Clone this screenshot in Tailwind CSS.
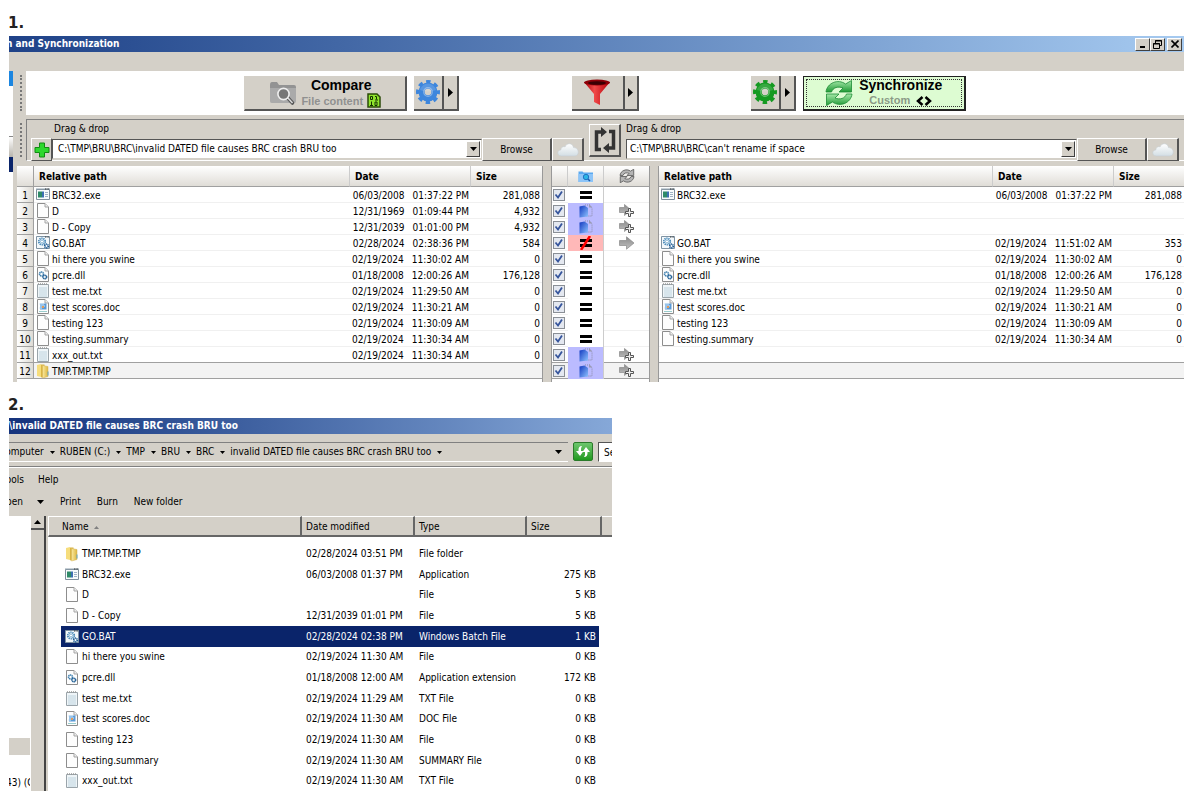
<!DOCTYPE html>
<html lang="en">
<head>
    <!-- Page setup -->
    <meta charset="UTF-8">
    <meta name="viewport" content="width=device-width, initial-scale=1.0">
    <title>Invalid dated file</title>
    <!-- Styling library -->
    <script src="https://cdn.jsdelivr.net/npm/@tailwindcss/browser@4"></script>
</head>
<body class="bg-white text-black px-[9px] pt-[15px] overflow-x-hidden font-['DejaVu_Sans_Condensed','DejaVu_Sans',sans-serif] text-[10px] leading-4">
    <!-- Shared icons -->
    <svg class="absolute w-0 h-0">
        <defs>
            <linearGradient id="gGrey" x1="0" y1="0" x2="0" y2="1"><stop offset="0" stop-color="#8a8a8a"/><stop offset="1" stop-color="#c2c2c2"/></linearGradient>
            <linearGradient id="gBlue" x1="0" y1="0" x2="1" y2="1"><stop offset="0" stop-color="#1238c0"/><stop offset="1" stop-color="#8fc4ff"/></linearGradient>
            <linearGradient id="gGreen" x1="0" y1="0" x2="0" y2="1"><stop offset="0" stop-color="#a5e8a8"/><stop offset="1" stop-color="#1f9a35"/></linearGradient>
            <linearGradient id="gCloud" x1="0" y1="0" x2="0" y2="1"><stop offset="0" stop-color="#ffffff"/><stop offset="1" stop-color="#d3dee4"/></linearGradient>
            <linearGradient id="gRed" x1="0" y1="0" x2="1" y2="0"><stop offset="0" stop-color="#a80008"/><stop offset=".4" stop-color="#f04a4a"/><stop offset="1" stop-color="#b5000a"/></linearGradient>
            <linearGradient id="gFolder" x1="0" y1="0" x2="1" y2="0"><stop offset="0" stop-color="#fbeaa0"/><stop offset="1" stop-color="#dcb640"/></linearGradient>
        </defs>
        <symbol id="file" viewBox="0 0 14 16">
            <path d="M1.500 .5H9l3.500 3.500V14.500H1.500Z" fill="#fdfdfd" stroke="#8d8d8d"/>
            <path d="M9 .5V4h3.500" fill="#eee" stroke="#a5a5a5"/>
        </symbol>
        <symbol id="txt" viewBox="0 0 14 16">
            <path d="M1.500 1.500h11v13h-11Z" fill="#eff5f8" stroke="#9aa4aa"/>
            <path d="M2 1h10" stroke="#999" stroke-width="1.500" stroke-dasharray="1 1"/>
            <path d="M3 5h8M3 7h8M3 9h8M3 11h8M3 13h8" stroke="#b4cbd8" stroke-width=".8"/>
        </symbol>
        <symbol id="doc" viewBox="0 0 14 16">
            <path d="M1.500 .5H9l3.500 3.500V14.500H1.500Z" fill="#fdfdfd" stroke="#8d8d8d"/>
            <path d="M9 .5V4h3.500" fill="#eee" stroke="#a5a5a5"/>
            <path d="M4 4.500h6.500v6H4Z" fill="#5b9ad6"/>
            <path d="M3 5h5M4 7h5M3 9h3" stroke="#d8ecfb"/><path d="M6 7h2v2H6Z" fill="#e39a5a"/><path d="M3 12.500h8" stroke="#9cc"/>
        </symbol>
        <symbol id="dll" viewBox="0 0 14 16">
            <path d="M1.500 .5H9l3.500 3.500V14.500H1.500Z" fill="#fdfdfd" stroke="#8d8d8d"/>
            <path d="M9 .5V4h3.500" fill="#eee" stroke="#a5a5a5"/>
            <circle cx="5.500" cy="7" r="2" fill="none" stroke="#3f7fae" stroke-width="1.600" stroke-dasharray="1.200 .4"/>
            <circle cx="8.800" cy="10" r="1.800" fill="none" stroke="#2a669a" stroke-width="1.600" stroke-dasharray="1.200 .3"/>
        </symbol>
        <symbol id="exe" viewBox="0 0 14 16">
            <path d="M.5 2.500h13v10H.5Z" fill="#f8fbfc" stroke="#7f8f9c"/>
            <path d="M0 2h14" stroke="#8fa0ac"/><path d="M9 2h4" stroke="#333" stroke-dasharray="1 .6"/>
            <path d="M2 4.500h4v6H2Z" fill="#2f8b68"/><path d="M6 4.500h2v6H6Z" fill="#3d6fb2"/><path d="M9 5.500h3M9 7.500h3M9 9.500h3" stroke="#9fb2c4"/>
        </symbol>
        <symbol id="bat" viewBox="0 0 14 16">
            <path d="M.5 1.500h13v12H.5Z" fill="#f3f8fb" stroke="#7f93a3"/><path d="M9 2h4" stroke="#333" stroke-dasharray="1 .6"/>
            <circle cx="6" cy="6.500" r="3.200" fill="none" stroke="#4688b8" stroke-width="1.800" stroke-dasharray="1.300 .7"/>
            <circle cx="6" cy="6.500" r="1.500" fill="#fff" stroke="#6ba3c9" stroke-width=".8"/>
            <circle cx="10.500" cy="11" r="1.800" fill="#fff" stroke="#1f5c94" stroke-width="1.700" stroke-dasharray="1.200 .5"/>
        </symbol>
        <symbol id="folder" viewBox="0 0 14 16">
            <path d="M1 2l4-1v13l-4-1Z" fill="#f6dd7c"/><path d="M5 1.500h3.500v12L5 14.500Z" fill="#d9b445"/>
            <path d="M6.500 2.500l5.500 1v10l-5.500 1.500Z" fill="url(#gFolder)" stroke="#d2b050" stroke-width=".5"/><path d="M12 8.500v4" stroke="#5fa3c8"/>
        </symbol>
        <symbol id="gear" viewBox="0 0 26 26">
            <circle cx="13" cy="13" r="9.800" fill="none" stroke="currentColor" stroke-width="4.400" stroke-dasharray="4.200 3.500" stroke-dashoffset="2.100"/>
            <circle cx="13" cy="13" r="6.400" fill="none" stroke="currentColor" stroke-width="6.200"/>
            <circle cx="13" cy="13" r="4.300" fill="none" stroke="#fff" stroke-opacity=".35" stroke-width="1.200"/>
            <path d="M5 11a8.200 8.200 0 0 1 16 0Q13 14 5 11" fill="#fff" fill-opacity=".14"/>
        </symbol>
        <symbol id="cloud" viewBox="0 0 22 14">
            <path d="M4.500 13C-.5 13-.2 7 3.800 7 4 3.500 7 3.200 8 4 9.500-.5 16-.3 16.500 4.600 22.500 4.500 22.800 13 17.500 13Z" fill="url(#gCloud)" stroke="#c6cfd4" stroke-width=".6"/>
        </symbol>
        <symbol id="cycle" viewBox="0 0 28 26">
            <path d="M1 12C2 3 13-1.500 20.500 4L26.500 .5V12H14L18 8C13 6 8 7.500 6.500 12Z"/>
            <path d="M27 14C26 23 15 27.500 7.500 22L1.500 25.500V14H14L10 18C15 20 20 18.500 21.500 14Z"/>
        </symbol>
        <symbol id="camera" viewBox="0 0 28 26">
            <path d="M1 5Q1 2 3 2h5l2 3h15q2 0 2 2v14q0 2-2 2H3q-2 0-2-2Z" fill="currentColor"/>
            <path d="M1 8h26v13q0 2-2 2H3q-2 0-2-2Z" fill="#fff" fill-opacity=".22"/>
            <path d="M18.500 17.500l5 5.500" stroke="#555" stroke-width="3.600" stroke-linecap="round"/><path d="M18.500 17.500l5 5.500" stroke="#ddd" stroke-width="1.500"/>
            <circle cx="14.500" cy="14" r="5.600" fill="var(--lens)" stroke="#eee" stroke-width="1.600"/>
        </symbol>
        <symbol id="folderLens" viewBox="0 0 16 14">
            <path d="M.5 2.500h4l1 1h9.500v9.500H.5Z" fill="#5aa9f0"/><path d="M.5 5h14.500v8H.5Z" fill="#8cc4f8"/>
            <path d="M9 9l3 3" stroke="#1c5fae" stroke-width="1.500"/><circle cx="8" cy="8" r="2.700" fill="#2bb4e4" stroke="#1f74c4"/>
        </symbol>
        <symbol id="equal" viewBox="0 0 12 8"><path d="M0 0h12v3H0ZM0 5h12v3H0Z"/></symbol>
        <symbol id="copy" viewBox="0 0 16 14">
            <path d="M7 1h5l2 3v8H8" fill="none" stroke="#8b8ba8" stroke-dasharray="1 1"/><path d="M11 0l3 3.500h-3Z" fill="#999ab0"/>
            <path d="M1.500 2.500l5-1 3.500 2.500v8.500l-8.500 1Z" fill="url(#gBlue)"/>
        </symbol>
        <symbol id="arrow" viewBox="0 0 16 14"><path d="M.5 4.500h7V.8L15 7l-7.500 6.200V9.500h-7Z" fill="url(#gGrey)" stroke="#8a8a8a" stroke-width=".7"/></symbol>
        <symbol id="arrowPlus" viewBox="0 0 16 14">
            <path d="M.5 3.500h5V.5l6.500 5.500-6.500 5.500V8.500h-5Z" fill="url(#gGrey)" stroke="#8a8a8a" stroke-width=".7"/>
            <path d="M9.500 4.500h2v3h3v2h-3v3h-2v-3h-3v-2h3Z" fill="#eee" stroke="#555"/>
        </symbol>
        <symbol id="caret" viewBox="0 0 7 4"><path d="M0 0h7L3.500 4Z"/></symbol>
        <symbol id="tick" viewBox="0 0 12 12"><path d="M2.500 5.500l2.500 3 4-6" fill="none" stroke="#36559c" stroke-width="1.800"/></symbol>
    </svg>

    <h2 class="font-['DejaVu_Sans',sans-serif] font-bold text-[15px] leading-4 h-[21px] -ml-px text-[#222]">1.</h2>

    <!-- Compare window -->
    <section class="bg-[#d4d0c8]">
        <div class="h-4 flex items-center bg-linear-to-r from-[#1f4288] to-[#a6caf0] text-white font-bold overflow-hidden">
            <span class="-ml-[3px] flex-1 whitespace-nowrap">n and Synchronization</span>
            <div class="flex items-center pr-[2px]">
                <button aria-label="Minimize" class="w-[15px] h-[13px] grid place-items-center bg-[#d4d0c8] border border-white border-r-[#404040] border-b-[#404040]"><svg class="w-2 h-2" viewBox="0 0 8 8"><path d="M1 6h5v2H1Z"/></svg></button>
                <button aria-label="Restore" class="w-[15px] h-[13px] grid place-items-center bg-[#d4d0c8] border border-white border-r-[#404040] border-b-[#404040]"><svg class="w-[9px] h-[9px]" viewBox="0 0 9 9" fill="none" stroke="#000"><path d="M2.500 3V.5h6v5H7M2 1h7M.5 3.500h6v5h-6ZM0 4h7"/></svg></button>
                <button aria-label="Close" class="ml-[2px] w-[15px] h-[13px] grid place-items-center bg-[#d4d0c8] border border-white border-r-[#404040] border-b-[#404040]"><svg class="w-2 h-2" viewBox="0 0 8 8"><path d="M.5 .5l7 7M7.500 .5l-7 7" stroke="#000" stroke-width="1.600"/></svg></button>
            </div>
        </div>
        <div class="h-[19px]"></div>

        <div class="flex">
            <!-- Edge of the neighbouring pane -->
            <div class="w-1 shrink-0 bg-white">
                <div class="h-[15px] bg-[#1c86e0]"></div>
                <div class="h-[50px]"></div>
                <div class="h-[21px] bg-linear-to-b from-white to-[#b8b4ac] border-t border-[#888]"></div>
                <div class="h-[15px] bg-[#0a246a]"></div>
            </div>
            <div class="flex-1 min-w-0 pl-1">
                <!-- Toolbar -->
                <div class="flex">
                    <div class="w-[9px] pl-[3px] py-1"><div class="h-full border-l-2 border-dotted border-[#777]"></div></div>
                    <div class="flex-1 h-11 bg-white flex items-center">
                        <div class="grow-35"></div>
                        <button class="w-[163px] h-[35px] flex items-center justify-center gap-1 bg-[#d4d0c8] border border-[#d4d0c8] border-r-2 border-b-2 border-r-[#555] border-b-[#555] font-['Liberation_Sans',sans-serif] font-bold">
                            <svg class="w-7 h-[26px] text-[#939393] [--lens:#777]"><use href="#camera"/></svg>
                            <span class="flex flex-col items-center">
                                <span class="text-[14px] leading-4">Compare</span>
                                <span class="flex items-center gap-1 text-[11px] leading-4 text-[#909090]">File content
                                    <svg class="w-[14px] h-[15px]" viewBox="0 0 14 15"><path d="M1 1h9l3 3v10H1Z" fill="#8fe32c" stroke="#2b4a08" stroke-width="1.500"/><g fill="none" stroke="#143000"><path d="M3.500 3.500h2v3h-2ZM8 3.500h1.500v3M8 7h3M4.500 8.500v4M3 12.500h3M8 9h2v3.500H8Z"/></g></svg>
                                </span>
                            </span>
                        </button>
                        <button aria-label="Comparison settings" class="ml-[7px] w-[30px] h-[35px] grid place-items-center bg-[#d4d0c8] border-r-2 border-b-2 border-[#555] text-[#3d86dd]"><svg class="w-[26px] h-[26px]"><use href="#gear"/></svg></button>
                        <button aria-label="Comparison menu" class="w-[15px] h-[35px] grid place-items-center bg-[#d4d0c8] border-r-2 border-b-2 border-[#555]"><svg class="w-[5px] h-[9px]" viewBox="0 0 5 9"><path d="M0 0l5 4.500L0 9Z"/></svg></button>
                        <div class="grow-18"></div>
                        <button aria-label="Filter" class="w-[53px] h-[35px] grid place-items-center bg-[#d4d0c8] border-r-2 border-b-2 border-[#555]">
                            <svg class="w-[26px] h-[26px]" viewBox="0 0 26 26"><path d="M0 3L10 15v8l6 3V15L26 3Z" fill="url(#gRed)"/><ellipse cx="13" cy="3.500" rx="13" ry="3" fill="#8d0008"/><ellipse cx="13" cy="4" rx="9" ry="1.800" fill="#3a0004"/></svg>
                        </button>
                        <button aria-label="Filter menu" class="w-[14px] h-[35px] grid place-items-center bg-[#d4d0c8] border-r-2 border-b-2 border-[#555]"><svg class="w-[5px] h-[9px]" viewBox="0 0 5 9"><path d="M0 0l5 4.500L0 9Z"/></svg></button>
                        <div class="grow-18"></div>
                        <button aria-label="Synchronization settings" class="w-[30px] h-[35px] grid place-items-center bg-[#d4d0c8] border-r-2 border-b-2 border-[#555] text-[#159a22]"><svg class="w-[26px] h-[26px]"><use href="#gear"/></svg></button>
                        <button aria-label="Synchronization menu" class="w-[15px] h-[35px] grid place-items-center bg-[#d4d0c8] border-r-2 border-b-2 border-[#555]"><svg class="w-[5px] h-[9px]" viewBox="0 0 5 9"><path d="M0 0l5 4.500L0 9Z"/></svg></button>
                        <button class="ml-[7px] w-[163px] h-[35px] p-0.5 bg-[#ddfcd2] border border-[#222] border-r-2 border-b-2 font-['Liberation_Sans',sans-serif] font-bold">
                            <span class="h-full border border-dotted border-[#333] flex items-center justify-center gap-[6px]">
                                <svg class="w-7 h-[26px]" fill="url(#gGreen)" stroke="#1c8a35" stroke-width=".8"><use href="#cycle"/></svg>
                                <span class="flex flex-col items-center">
                                    <span class="text-[14px] leading-4">Synchronize</span>
                                    <span class="flex items-center gap-1.5 text-[11px] leading-[15px] text-[#8a9a86]">Custom
                                        <svg class="w-4 h-[10px]" viewBox="0 0 16 10" fill="none" stroke="#000" stroke-width="2.500"><path d="M6.500 1L2 5l4.500 4M9.500 1L14 5 9.500 9"/></svg>
                                    </span>
                                </span>
                            </span>
                        </button>
                        <div class="grow-35"></div>
                    </div>
                </div>
                <div class="h-1"></div>

                <!-- Folder pair -->
                <div class="flex">
                    <div class="w-[9px] pl-[3px] py-1"><div class="h-full border-l-2 border-dotted border-[#777]"></div></div>
                    <div class="flex-1 min-w-0 h-[42px] flex border-t border-l border-[#808080] border-b-white border-b">
                        <div class="flex-1 min-w-0 pl-1 pr-[2px]">
                            <label for="leftFolder" class="block pl-[23px] pt-px h-[19px]">Drag &amp; drop</label>
                            <div class="flex h-[22px] -mt-px">
                                <button aria-label="Add folder pair" class="w-[21px] h-[23px] grid place-items-center bg-[#d4d0c8] border border-white border-r-[#555] border-b-[#555]"><svg class="w-4 h-4" viewBox="0 0 16 16"><path d="M5.500 1h5v4.500H15v5h-4.500V15h-5v-4.500H1v-5h4.500Z" fill="#2fd82f" stroke="#138a13"/></svg></button>
                                <div class="relative flex-1 min-w-0 h-5 mt-px">
                                    <select id="leftFolder" class="appearance-none w-full h-full pl-[5px] bg-white border border-[#555] border-r-[#d4d0c8] border-b-[#d4d0c8] leading-4"><option>C:\TMP\BRU\BRC\invalid DATED file causes BRC crash BRU too</option></select>
                                    <span class="absolute right-0.5 top-0.5 w-[14px] h-4 grid place-items-center pointer-events-none bg-[#d4d0c8] border border-white border-r-[#404040] border-b-[#404040]"><svg class="w-[7px] h-1"><use href="#caret"/></svg></span>
                                </div>
                                <button class="w-[70px] h-[23px] bg-[#d4d0c8] border border-white border-r-2 border-r-[#555] border-b-[#555]">Browse</button>
                                <button aria-label="Left cloud storage" class="w-8 h-[23px] grid place-items-center bg-[#d4d0c8] border border-white border-r-2 border-r-[#555] border-b-[#555]"><svg class="w-[22px] h-[14px]"><use href="#cloud"/></svg></button>
                            </div>
                        </div>
                        <div class="w-10 pl-[3px] pt-1">
                            <button aria-label="Swap sides" class="w-8 h-[33px] grid place-items-center bg-[#d4d0c8] border border-white border-r-2 border-b-2 border-r-[#555] border-b-[#555]">
                                <svg class="w-[22px] h-[26px]" viewBox="0 0 22 26"><g fill="none" stroke="#333" stroke-width="3.500"><path d="M7 22.500H2.500V5H8M15 4.500h4.500V21H14"/></g><path d="M7 0l6 5-6 5ZM15 16l-6 5 6 5Z" fill="#333"/></svg>
                            </button>
                        </div>
                        <div class="flex-1 min-w-0 pr-[5px]">
                            <label for="rightFolder" class="block pt-px h-[19px]">Drag &amp; drop</label>
                            <div class="flex h-[22px] -mt-px">
                                <div class="relative flex-1 min-w-0 h-5 mt-px">
                                    <select id="rightFolder" class="appearance-none w-full h-full pl-[3px] bg-white border border-[#555] border-r-[#d4d0c8] border-b-[#d4d0c8] leading-4"><option>C:\TMP\BRU\BRC\can't rename if space</option></select>
                                    <span class="absolute right-0.5 top-0.5 w-[14px] h-4 grid place-items-center pointer-events-none bg-[#d4d0c8] border border-white border-r-[#404040] border-b-[#404040]"><svg class="w-[7px] h-1"><use href="#caret"/></svg></span>
                                </div>
                                <button class="w-[70px] h-[23px] bg-[#d4d0c8] border border-white border-r-2 border-r-[#555] border-b-[#555]">Browse</button>
                                <button aria-label="Right cloud storage" class="w-8 h-[23px] grid place-items-center bg-[#d4d0c8] border border-white border-r-2 border-r-[#555] border-b-[#555]"><svg class="w-[22px] h-[14px]"><use href="#cloud"/></svg></button>
                            </div>
                        </div>
                    </div>
                </div>
                <div class="h-[5px]"></div>

                <!-- Comparison grids -->
                <div class="flex items-stretch">
                    <div class="flex-1 min-w-0 bg-white border-r border-[#999] pb-[3px]">
                        <table class="table-fixed w-full border-separate border-spacing-0 whitespace-nowrap">
                            <thead class="text-left">
                                <tr class="h-[21px] bg-linear-to-b from-white to-[#dedbd5]">
                                    <th class="w-[17px] border-r border-b border-[#a0a0a0]"></th>
                                    <th class="pt-[2px] pl-[5px] border-r border-b border-[#a0a0a0] border-r-[#ccc]">Relative path</th>
                                    <th class="pt-[2px] w-[121px] pl-[5px] border-r border-b border-[#a0a0a0] border-r-[#ccc]">Date</th>
                                    <th class="pt-[2px] w-[71px] pl-[5px] border-b border-[#a0a0a0]">Size</th>
                                </tr>
                            </thead>
                            <tbody id="leftRows"></tbody>
                        </table>
                    </div>
                    <div class="w-2"></div>
                    <div class="w-[99px] bg-white border-x border-[#999] pb-[3px]">
                        <table class="table-fixed w-full border-separate border-spacing-0">
                            <thead>
                                <tr class="h-[21px] bg-linear-to-b from-white to-[#dedbd5]">
                                    <th class="w-4 border-r border-b border-[#a0a0a0] border-r-[#ccc]"></th>
                                    <th class="w-[36px] border-r border-b border-[#a0a0a0] border-r-[#ccc]"><svg class="mx-auto w-4 h-[14px]"><use href="#folderLens"/></svg></th>
                                    <th class="border-b border-[#a0a0a0]"><svg class="mx-auto w-4 h-[14px]" fill="#b5b5b5" stroke="#555" stroke-width="1.500"><use href="#cycle"/></svg></th>
                                </tr>
                            </thead>
                            <tbody id="actionRows"></tbody>
                        </table>
                    </div>
                    <div class="w-2"></div>
                    <div class="flex-1 min-w-0 bg-white border-l border-[#999] pb-[3px]">
                        <table class="table-fixed w-full border-separate border-spacing-0 whitespace-nowrap">
                            <thead class="text-left">
                                <tr class="h-[21px] bg-linear-to-b from-white to-[#dedbd5]">
                                    <th class="pt-[2px] pl-[5px] border-r border-b border-[#a0a0a0] border-r-[#ccc]">Relative path</th>
                                    <th class="pt-[2px] w-[121px] pl-[5px] border-r border-b border-[#a0a0a0] border-r-[#ccc]">Date</th>
                                    <th class="pt-[2px] w-[70px] pl-[5px] border-b border-[#a0a0a0]">Size</th>
                                </tr>
                            </thead>
                            <tbody id="rightRows"></tbody>
                        </table>
                    </div>
                </div>
            </div>
        </div>
    </section>

    <h2 class="font-['DejaVu_Sans',sans-serif] font-bold text-[15px] leading-4 mt-[15px] h-[21px] -ml-px text-[#222]">2.</h2>

    <!-- Explorer window -->
    <section class="w-[603px] max-w-full bg-[#d4d0c8] overflow-hidden whitespace-nowrap">
        <div class="h-4 bg-linear-to-r from-[#15337c] to-[#86a8d8] text-white font-bold">\invalid DATED file causes BRC crash BRU too</div>
        <div class="h-[33px] pt-2 border-b border-[#808080] flex gap-[5px]">
            <nav class="-ml-[10px] flex-1 h-5 flex items-center border-y border-[#808080] border-b-white pr-[6px]">
                <ol id="crumbs" class="flex-1 flex items-center gap-[5px]"></ol>
                <svg class="w-[7px] h-1"><use href="#caret"/></svg>
            </nav>
            <button aria-label="Refresh" class="w-5 h-[19px] rounded-xs border border-[#2a7a2a] bg-linear-to-b from-[#6cc66c] to-[#1d9a1d] grid place-items-center">
                <svg class="w-4 h-[13px]" viewBox="0 0 16 13"><path d="M7 1Q3 1 3.500 6H1l4 5 3.500-5H6Q5.500 3 7 1ZM9 12q4 0 3.500-5H15l-4-5-3.500 5H10q.5 3-1 5Z" fill="#fff"/></svg>
            </button>
            <input type="text" aria-label="Search" value="Search" class="w-[14px] h-5 pl-[5px] bg-white border border-[#555] border-r-0 border-b-white">
        </div>
        <div class="h-[49px] border-t border-white pt-px">
            <div class="flex gap-[14px] h-[22px] items-center"><a href="#" class="-ml-[7px]">Tools</a><a href="#">Help</a></div>
            <div class="flex gap-4 h-[22px] items-center">
                <a href="#" class="-ml-[10px] flex items-center gap-[14px]">Open<svg class="w-[7px] h-1"><use href="#caret"/></svg></a>
                <a href="#">Print</a><a href="#">Burn</a><a href="#">New folder</a>
            </div>
        </div>
        <div class="flex">
            <div class="w-[21px] bg-white overflow-hidden flex flex-col">
                <div class="flex-1"></div>
                <div class="h-[17px] bg-[#d4d0c8]"></div>
                <div class="mt-5 h-4"><span class="-ml-[3px]">43) (G:)</span></div>
            </div>
            <div class="w-[14px] border-l border-white">
                <div class="h-[14px] grid place-items-center border-b-2 border-[#555]"><svg class="w-[7px] h-1 rotate-180"><use href="#caret"/></svg></div>
            </div>
            <div class="w-1 border-l-2 border-[#444] bg-[#d4d0c8]"></div>
            <div class="flex-1 min-w-0 bg-white">
                <table class="table-fixed w-full border-separate border-spacing-0">
                    <colgroup><col class="w-[13px]"><col><col class="w-[113px]"><col class="w-[112px]"><col class="w-[72px]"><col class="w-[3px]"><col class="w-[10px]"></colgroup>
                    <thead class="text-left bg-[#d4d0c8]">
                        <tr class="h-[21px]">
                            <th colspan="2" class="font-normal pt-[2px] pl-[13px] border-t border-l border-white border-r-2 border-r-[#666] border-b-2 border-b-[#666]"><span class="flex items-center gap-[5px]">Name <svg class="w-[5px] h-[3px]" viewBox="0 0 5 3"><path d="M0 3L2.500 0 5 3Z" fill="#808080"/></svg></span></th>
                            <th class="font-normal pt-[2px] pl-1 border-t border-white border-r-2 border-r-[#666] border-b-2 border-b-[#666]">Date modified</th>
                            <th class="font-normal pt-[2px] pl-1 border-t border-white border-r-2 border-r-[#666] border-b-2 border-b-[#666]">Type</th>
                            <th colspan="2" class="font-normal pt-[2px] pl-1 border-t border-white border-r-2 border-r-[#666] border-b-2 border-b-[#666]">Size</th>
                            <th class="border-t border-white border-b-2 border-b-[#666]"></th>
                        </tr>
                        <tr class="h-[6px] bg-white"><td colspan="7"></td></tr>
                    </thead>
                    <tbody id="explorerRows"></tbody>
                </table>
            </div>
        </div>
    </section>

    <!-- Page data -->
    <script>
        //Left side, action, right side
        const files = [
            { name: 'BRC32.exe', icon: 'exe', date: '06/03/2008', time: '01:37:22 PM', size: '281,088', state: 'equal' },
            { name: 'D', icon: 'file', date: '12/31/1969', time: '01:09:44 PM', size: '4,932', state: 'copy' },
            { name: 'D - Copy', icon: 'file', date: '12/31/2039', time: '01:01:00 PM', size: '4,932', state: 'copy' },
            { name: 'GO.BAT', icon: 'bat', date: '02/28/2024', time: '02:38:36 PM', size: '584', state: 'differ', right: { date: '02/19/2024', time: '11:51:02 AM', size: '353' } },
            { name: 'hi there you swine', icon: 'file', date: '02/19/2024', time: '11:30:02 AM', size: '0', state: 'equal' },
            { name: 'pcre.dll', icon: 'dll', date: '01/18/2008', time: '12:00:26 AM', size: '176,128', state: 'equal' },
            { name: 'test me.txt', icon: 'txt', date: '02/19/2024', time: '11:29:50 AM', size: '0', state: 'equal' },
            { name: 'test scores.doc', icon: 'doc', date: '02/19/2024', time: '11:30:21 AM', size: '0', state: 'equal' },
            { name: 'testing 123', icon: 'file', date: '02/19/2024', time: '11:30:09 AM', size: '0', state: 'equal' },
            { name: 'testing.summary', icon: 'file', date: '02/19/2024', time: '11:30:34 AM', size: '0', state: 'equal' },
            { name: 'xxx_out.txt', icon: 'txt', date: '02/19/2024', time: '11:30:34 AM', size: '0', state: 'copy' },
            { name: 'TMP.TMP.TMP', icon: 'folder', date: '', time: '', size: '', state: 'copy' }
        ];
        const explorer = [
            ['folder', 'TMP.TMP.TMP', '02/28/2024 03:51 PM', 'File folder', ''],
            ['exe', 'BRC32.exe', '06/03/2008 01:37 PM', 'Application', '275 KB'],
            ['file', 'D', '', 'File', '5 KB'],
            ['file', 'D - Copy', '12/31/2039 01:01 PM', 'File', '5 KB'],
            ['bat', 'GO.BAT', '02/28/2024 02:38 PM', 'Windows Batch File', '1 KB'],
            ['file', 'hi there you swine', '02/19/2024 11:30 AM', 'File', '0 KB'],
            ['dll', 'pcre.dll', '01/18/2008 12:00 AM', 'Application extension', '172 KB'],
            ['txt', 'test me.txt', '02/19/2024 11:29 AM', 'TXT File', '0 KB'],
            ['doc', 'test scores.doc', '02/19/2024 11:30 AM', 'DOC File', '0 KB'],
            ['file', 'testing 123', '02/19/2024 11:30 AM', 'File', '0 KB'],
            ['file', 'testing.summary', '02/19/2024 11:30 AM', 'SUMMARY File', '0 KB'],
            ['txt', 'xxx_out.txt', '02/19/2024 11:30 AM', 'TXT File', '0 KB']
        ];

        //Row border and background
        const line = f => f.icon === 'folder' ? 'border-b border-[#a0a0a0] bg-[#f3f3f3]' : f.name === 'xxx_out.txt' ? 'border-b border-[#a0a0a0]' : 'border-b border-[#f0f0f0]';

        //Name, date and size cells
        const cells = (f, v) => `
            <td class="p-0 ${line(f)}"><span class="flex items-start gap-[2px] h-[15px] leading-[17px] pl-0.5"><svg class="w-[14px] h-4 shrink-0"><use href="#${f.icon}"/></svg>${f.name}</span></td>
            <td class="p-0 ${line(f)}"><span class="flex h-[15px] leading-[17px] justify-end gap-2 pr-[2px]"><span>${v.date}</span><span>${v.time}</span></span></td>
            <td class="p-0 ${line(f)}"><span class="block h-[15px] leading-[17px] text-right pr-0.5">${v.size}</span></td>`;

        const marks = {
            equal: '<svg class="mx-auto w-3 h-2"><use href="#equal"/></svg>',
            copy: '<svg class="mx-auto w-4 h-[14px]"><use href="#copy"/></svg>',
            differ: '<svg class="mx-auto w-[14px] h-[14px]" viewBox="0 0 14 14"><path d="M1 3h12v3H1ZM1 8h12v3H1Z"/><path d="M2 14L11 0" stroke="#f00" stroke-width="2.500"/></svg>'
        };
        const tint = { equal: '', copy: 'bg-[#bbbbff]', differ: 'bg-[#ffb8b8]' };
        const action = { equal: '', copy: '<svg class="mx-auto w-4 h-[14px]"><use href="#arrowPlus"/></svg>', differ: '<svg class="mx-auto w-4 h-[14px]"><use href="#arrow"/></svg>' };

        document.getElementById('leftRows').innerHTML = files.map((f, i) => `
            <tr class="h-4"><td class="p-0 border-r border-b border-[#a0a0a0] bg-linear-to-r from-white to-[#dedbd5]"><span class="block h-[15px] leading-[17px] text-center">${i + 1}</span></td>${cells(f, f)}</tr>`).join('');

        document.getElementById('actionRows').innerHTML = files.map(f => `
            <tr class="h-4">
                <td class="p-0 ${line(f)}"><label class="grid items-center justify-items-start pl-px h-[15px]">
                    <input type="checkbox" checked aria-label="Include ${f.name}" class="peer col-start-1 row-start-1 appearance-none w-3 h-3 border border-[#8a8f96] bg-[#e4e8f0]">
                    <svg class="col-start-1 row-start-1 w-3 h-3 pointer-events-none invisible peer-checked:visible"><use href="#tick"/></svg>
                </label></td>
                <td class="p-0 border-r border-r-[#ccc] ${tint[f.state]}">${marks[f.state]}</td>
                <td class="p-0 ${line(f)}">${action[f.state]}</td>
            </tr>`).join('');

        document.getElementById('rightRows').innerHTML = files.map(f => {
            if (f.state === 'copy') return `<tr class="h-4"><td class="p-0 ${line(f)}"></td><td class="p-0 ${line(f)}"></td><td class="p-0 ${line(f)}"></td></tr>`;
            return `<tr class="h-4">${cells(f, f.right || f)}</tr>`;
        }).join('');

        document.getElementById('crumbs').innerHTML = ['Computer', 'RUBEN (C:)', 'TMP', 'BRU', 'BRC', 'invalid DATED file causes BRC crash BRU too'].map(c => `
            <li class="flex items-center gap-[6px]"><a href="#">${c}</a><svg class="w-[5px] h-[3px]"><use href="#caret"/></svg></li>`).join('');

        document.getElementById('explorerRows').innerHTML = explorer.map(([icon, name, date, type, size], i) => {
            const on = name === 'GO.BAT' ? 'bg-[#0a246a] text-white' : '';
            return `<tr class="${i % 3 === 2 ? 'h-[20px]' : 'h-[21px]'}">
                <td class="p-0"></td>
                <td class="p-0 ${on}"><span class="flex items-center gap-[3px] pl-1"><svg class="w-[14px] h-4 shrink-0"><use href="#${icon}"/></svg>${name}</span></td>
                <td class="p-0 pl-1 ${on}">${date}</td>
                <td class="p-0 pl-1 ${on}">${type}</td>
                <td class="p-0 pr-[3px] text-right ${on}">${size}</td>
                <td class="p-0"></td><td class="p-0"></td>
            </tr>`;
        }).join('');
    </script>
</body>
</html>
